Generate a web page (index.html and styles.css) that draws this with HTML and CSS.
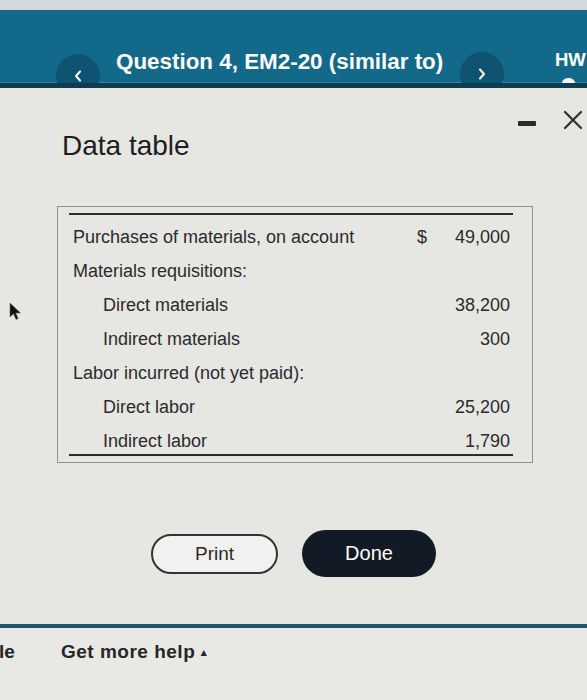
FILE: index.html
```html
<!DOCTYPE html>
<html lang="en">
<head>
    <meta charset="UTF-8">
    <meta name="viewport" content="width=device-width, initial-scale=1.0">
    <title>Data table</title>
    <link rel="stylesheet" href="styles.css">
</head>
<body>
    <div class="top-strip"></div>
    <header class="topbar">
        <span class="nav-btn prev">
            <svg width="8" height="12" viewBox="0 0 8 12"><polyline points="6,1.5 2,6 6,10.5" fill="none" stroke="#fff" stroke-width="2" stroke-linecap="round" stroke-linejoin="round"/></svg>
        </span>
        <h1 class="q-title">Question 4, EM2-20 (similar to)</h1>
        <span class="nav-btn next">
            <svg width="8" height="12" viewBox="0 0 8 12"><polyline points="2,1.5 6,6 2,10.5" fill="none" stroke="#fff" stroke-width="2" stroke-linecap="round" stroke-linejoin="round"/></svg>
        </span>
        <div class="hw">HW<span class="hw-dot"></span></div>
    </header>

    <main class="dialog">
        <div class="dialog-head">
            <h2 class="dialog-title">Data table</h2>
            <div class="win-ctrls">
                <span class="minimize"></span>
                <svg class="close" width="20" height="20" viewBox="0 0 20 20"><path d="M2 2 L18 18 M18 2 L2 18" stroke="#2e2e2e" stroke-width="2.2" stroke-linecap="round"/></svg>
            </div>
        </div>

        <div class="data-box">
            <table class="data">
                <tr>
                    <td class="lvl1">Purchases of materials, on account</td>
                    <td class="cur">$</td>
                    <td class="num">49,000</td>
                </tr>
                <tr>
                    <td class="lvl1">Materials requisitions:</td>
                    <td class="cur"></td>
                    <td class="num"></td>
                </tr>
                <tr>
                    <td class="lvl2">Direct materials</td>
                    <td class="cur"></td>
                    <td class="num">38,200</td>
                </tr>
                <tr>
                    <td class="lvl2">Indirect materials</td>
                    <td class="cur"></td>
                    <td class="num">300</td>
                </tr>
                <tr>
                    <td class="lvl1">Labor incurred (not yet paid):</td>
                    <td class="cur"></td>
                    <td class="num"></td>
                </tr>
                <tr>
                    <td class="lvl2">Direct labor</td>
                    <td class="cur"></td>
                    <td class="num">25,200</td>
                </tr>
                <tr>
                    <td class="lvl2">Indirect labor</td>
                    <td class="cur"></td>
                    <td class="num">1,790</td>
                </tr>
            </table>
        </div>

        <div class="actions">
            <button class="btn-print">Print</button>
            <button class="btn-done">Done</button>
        </div>
    </main>

    <footer class="help-bar">
        <span class="cut">le</span>
        <span class="help">Get more help <small class="caret">&#9652;</small></span>
    </footer>

    <svg class="cursor" width="16" height="20" viewBox="0 0 16 20"><path d="M2 1 L2 15 L5.5 11.8 L8 17.5 L10.2 16.5 L7.8 11 L12.5 11 Z" fill="#111" stroke="#666" stroke-width="0.6"/></svg>
</body>
</html>
```

FILE: styles.css
```css
    body {
        margin: 0;
        padding: 0;
        width: 587px;
        height: 700px;
        overflow: hidden;
        position: relative;
        background: #e6e6e3;
        font-family: 'Liberation Sans', Arial, sans-serif;
        color: #2a2a2a;
    }

    .top-strip {
        height: 10px;
        background: #d6d9db;
    }

    /* teal question bar */
    .topbar {
        display: flex;
        align-items: flex-start;
        height: 73px;
        padding-left: 56px;
        overflow: hidden;
        background: #12698a;
        border-bottom: 5px solid #0c3d51;
        box-shadow: inset 0 -1px 0 #2c87a8;
    }

    .nav-btn {
        display: flex;
        align-items: center;
        justify-content: center;
        flex: none;
        width: 44px;
        height: 44px;
        border-radius: 50%;
        background: #0e5371;
    }

    .prev {
        margin-top: 44px;
    }

    .next {
        margin-top: 42px;
    }

    .q-title {
        width: 344px;
        margin: 38px 0 0 16px;
        font-size: 22.4px;
        line-height: 28px;
        font-weight: bold;
        color: #fff;
    }

    .hw {
        margin: 39px 0 0 51px;
        font-size: 18.5px;
        line-height: 22px;
        font-weight: bold;
        color: #fff;
    }

    .hw-dot {
        display: block;
        width: 13px;
        height: 10px;
        margin: 7px 0 0 7px;
        border-radius: 50%;
        background: #f4f4f4;
    }

    /* modal */
    .dialog {
        padding-bottom: 47px;
        background: #e6e6e3;
        border-bottom: 4px solid #22546a;
    }

    .dialog-head {
        display: flex;
        align-items: flex-start;
        padding: 0 4px 0 62px;
    }

    .dialog-title {
        margin: 42px 0 0;
        font-size: 28px;
        line-height: 32px;
        font-weight: normal;
        color: #1e1e1e;
    }

    .win-ctrls {
        display: flex;
        align-items: center;
        gap: 27px;
        height: 20px;
        margin: 22px 0 0 auto;
    }

    .minimize {
        width: 18px;
        height: 5px;
        margin-top: 6px;
        border-radius: 1px;
        background: #2b2b2b;
    }

    .data-box {
        box-sizing: border-box;
        width: 476px;
        margin: 44px 0 0 57px;
        padding: 6px 19px 6px 11px;
        border: 1px solid #8f8f8d;
    }

    .data {
        width: 100%;
        border-spacing: 0;
        border-top: 2px solid #2d2d2d;
        border-bottom: 2px solid #2d2d2d;
        font-size: 18px;
        color: #2b2b2b;
    }

    .data td {
        padding: 0;
        height: 34px;
        line-height: 34px;
        white-space: nowrap;
    }

    .data tr:first-child td {
        padding-top: 5px;
    }

    .data tr:last-child td {
        height: 26px;
        line-height: 26px;
        padding-top: 4px;
    }

    .lvl1 {
        padding-left: 4px !important;
    }

    .lvl2 {
        padding-left: 34px !important;
    }

    .cur {
        width: 13px;
        text-align: left;
    }

    .num {
        width: 80px;
        padding-right: 3px !important;
        text-align: right;
    }

    .actions {
        display: flex;
        align-items: center;
        justify-content: center;
        gap: 24px;
        margin-top: 67px;
    }

    .btn-print {
        width: 127px;
        height: 40px;
        border: 2px solid #333;
        border-radius: 20px;
        background: #f1f1ef;
        font-family: inherit;
        font-size: 19px;
        color: #2a2a2a;
    }

    .btn-done {
        width: 134px;
        height: 47px;
        border: none;
        border-radius: 24px;
        background: #121a25;
        font-family: inherit;
        font-size: 20px;
        color: #fff;
    }

    .help-bar {
        display: flex;
        height: 60px;
        padding-top: 12px;
        background: #e8e8e5;
        font-size: 19px;
        line-height: 24px;
        font-weight: bold;
        color: #262626;
    }

    .cut {
        width: 62px;
        margin-left: -1px;
    }

    .help {
        letter-spacing: 0.5px;
    }

    .caret {
        font-size: 11px;
        vertical-align: 2px;
    }

    .cursor {
        position: absolute;
        left: 8px;
        top: 302px;
    }
```
